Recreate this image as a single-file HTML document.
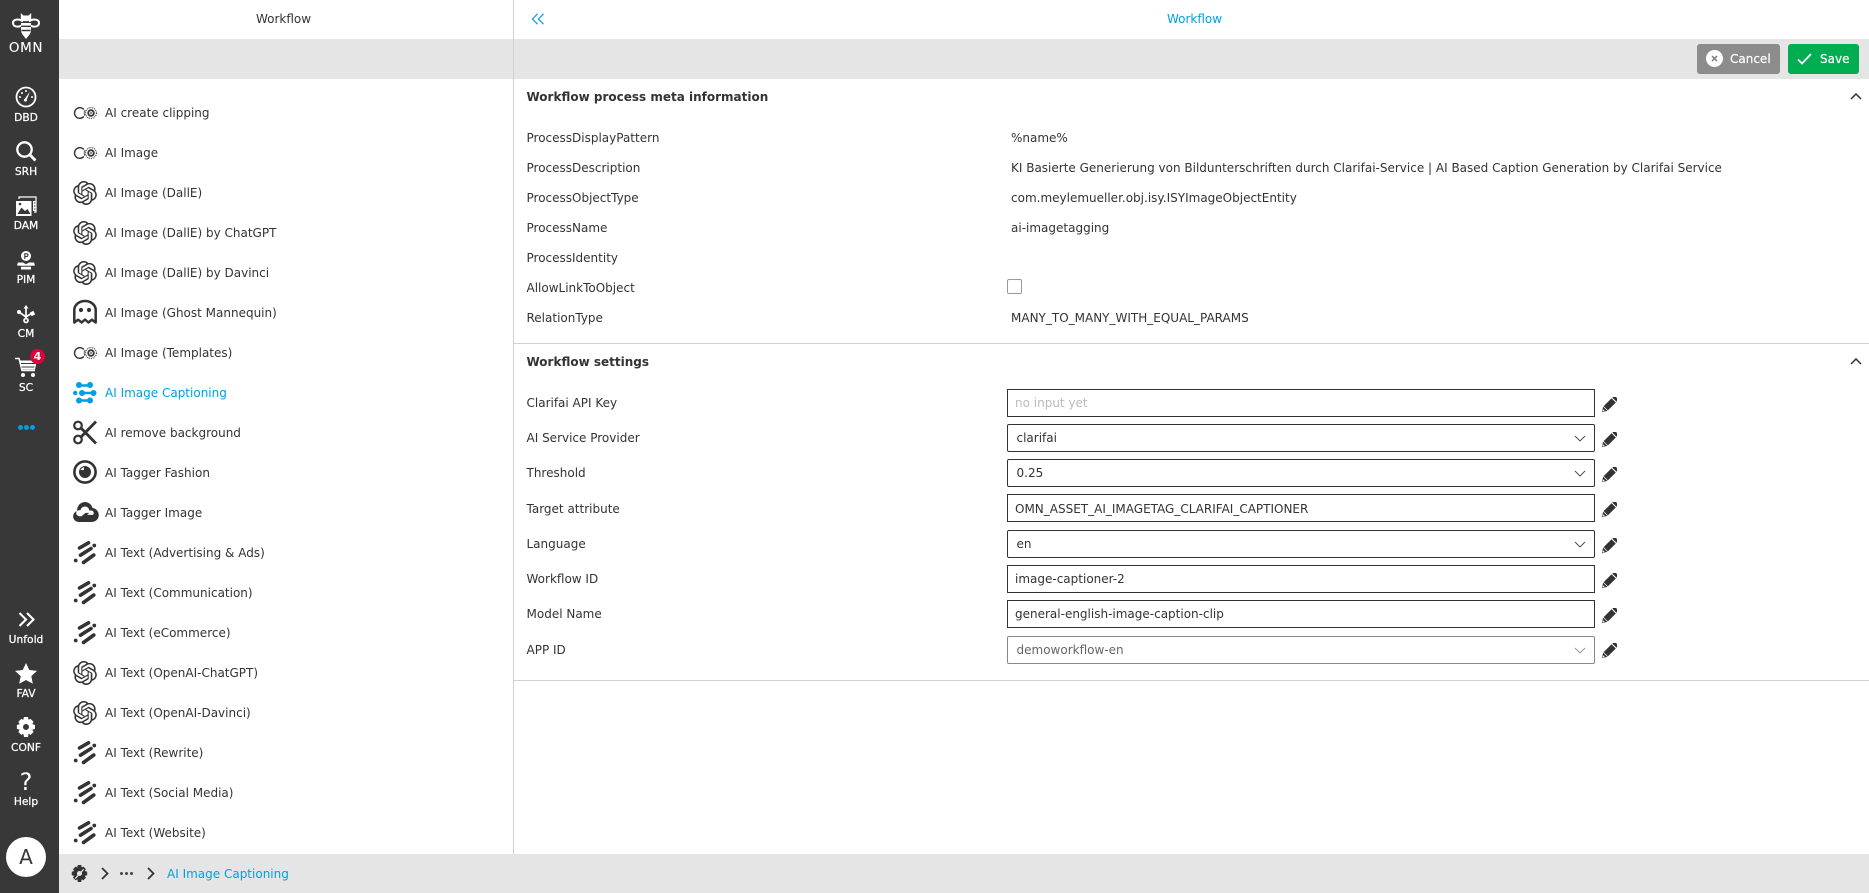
<!DOCTYPE html>
<html><head><meta charset="utf-8"><title>Workflow</title>
<style>
*{box-sizing:border-box}
html,body{margin:0;padding:0;width:1869px;height:893px;overflow:hidden;background:#fff}
body{font-family:"DejaVu Sans","Liberation Sans",sans-serif;font-size:12px;color:#333;position:relative}
.a{position:absolute}
.t{position:absolute;line-height:20px;height:20px;white-space:nowrap}
.n{position:absolute;left:0;width:52px;text-align:center;color:#fff;font-size:10.7px;line-height:14px;-webkit-text-stroke:.25px #fff;margin-top:1px}
.i{position:absolute;left:1007px;width:588px;height:28px;border:1.5px solid #333;background:#fff;line-height:27px;padding-left:7px;white-space:nowrap}
.s{border-radius:2px;padding-left:8.5px}
.dis{border-color:#888;color:#666}
.l{left:526.500px}
svg{position:absolute;overflow:visible}
</style></head><body>
<svg width="0" height="0" style="position:absolute"><defs>
<symbol id="oa" viewBox="0 0 24 24"><path fill="#333" d="M22.2819 9.8211a5.9847 5.9847 0 0 0-.5157-4.9108 6.0462 6.0462 0 0 0-6.5098-2.9A6.0651 6.0651 0 0 0 4.9807 4.1818a5.9847 5.9847 0 0 0-3.9977 2.9 6.0462 6.0462 0 0 0 .7427 7.0966 5.98 5.98 0 0 0 .511 4.9107 6.051 6.051 0 0 0 6.5146 2.9001A5.9847 5.9847 0 0 0 13.2599 24a6.0557 6.0557 0 0 0 5.7718-4.2058 5.9894 5.9894 0 0 0 3.9977-2.9001 6.0557 6.0557 0 0 0-.7475-7.0729zm-9.022 12.6081a4.4755 4.4755 0 0 1-2.8764-1.0408l.1419-.0804 4.7783-2.7582a.7948.7948 0 0 0 .3927-.6813v-6.7369l2.02 1.1686a.071.071 0 0 1 .038.052v5.5826a4.504 4.504 0 0 1-4.4945 4.4944zm-9.6607-4.1254a4.4708 4.4708 0 0 1-.5346-3.0137l.142.0852 4.783 2.7582a.7712.7712 0 0 0 .7806 0l5.8428-3.3685v2.3324a.0804.0804 0 0 1-.0332.0615L9.74 19.9502a4.4992 4.4992 0 0 1-6.1408-1.6464zM2.3408 7.8956a4.485 4.485 0 0 1 2.3655-1.9728V11.6a.7664.7664 0 0 0 .3879.6765l5.8144 3.3543-2.0201 1.1685a.0757.0757 0 0 1-.071 0l-4.8303-2.7865A4.504 4.504 0 0 1 2.3408 7.872zm16.5963 3.8558L13.1038 8.364 15.1192 7.2a.0757.0757 0 0 1 .071 0l4.8303 2.7913a4.4944 4.4944 0 0 1-.6765 8.1042v-5.6772a.79.79 0 0 0-.407-.667zm2.0107-3.0231l-.142-.0852-4.7735-2.7818a.7759.7759 0 0 0-.7854 0L9.409 9.2297V6.8974a.0662.0662 0 0 1 .0284-.0615l4.8303-2.7866a4.4992 4.4992 0 0 1 6.6802 4.66zM8.3065 12.863l-2.02-1.1638a.0804.0804 0 0 1-.038-.0567V6.0742a4.4992 4.4992 0 0 1 7.3757-3.4537l-.142.0805L8.704 5.459a.7948.7948 0 0 0-.3927.6813zm1.0976-2.3654l2.602-1.4998 2.6069 1.4998v2.9994l-2.5974 1.4997-2.6067-1.4997Z"/></symbol>
<symbol id="cl" viewBox="0 0 24 12"><path d="M10.800 2.500A5.300 5.300 0 1 0 10.800 9.500" fill="none" stroke="#333" stroke-width="1.400"/><path d="M12.200 3.200A4.500 4.500 0 0 0 12.200 8.800" fill="none" stroke="#333" stroke-width=".9"/><circle cx="18" cy="6" r="5.400" fill="none" stroke="#333" stroke-width="1.100" stroke-dasharray="1 .9"/><circle cx="18" cy="6" r="2.800" fill="none" stroke="#333" stroke-width="1.800"/><circle cx="18" cy="6" r=".9" fill="#333"/></symbol>
<symbol id="tx" viewBox="0 0 24 24"><g stroke="#333" stroke-width="3.600" stroke-linecap="round"><path d="M6.500 7L15.500 1.800M7.500 14.200L18 7.500M10.500 21.500L20.800 14"/><path d="M21.300 4.500h.01M2.700 19.500h.01" stroke-width="3.800"/></g></symbol>
<symbol id="pen" viewBox="0 0 16 16"><g transform="rotate(45 8 8)"><rect x="5" y="-2.600" width="6" height="3" rx=".8" fill="#333"/><path d="M5 1.400h6V12.600H5z" fill="#333"/><path d="M5 13.300h6L8 18.200z" fill="#333"/><path d="M6.600 15.200h2.800L8 17.200z" fill="#fff"/></g></symbol>
<symbol id="ch" viewBox="0 0 12 7"><path d="M1 1l5 5 5-5" fill="none" stroke="#444" stroke-width=".9"/></symbol>
<symbol id="chu" viewBox="0 0 12 7"><path d="M1 6l5-5 5 5" fill="none" stroke="#333" stroke-width="1.500"/></symbol>
</defs></svg>

<!-- sidebar -->
<div class="a" style="left:0;top:0;width:59px;height:893px;background:#383838"></div>
<svg style="left:12px;top:13px" width="28" height="26" viewBox="0 0 28 26"><g fill="none" stroke="#fff" stroke-width="2"><path d="M11 8.500C7 5.500 1 6 1 10s6 5 10 1.500"/><path d="M17 8.500c4-3 10-2.500 10 1.500s-6 5-10 1.500"/></g><path d="M8.800 0l2.600 2.500h5.200L19.200 0V5.800c0 1.500-2 2.400-5.200 2.400s-5.200-.9-5.200-2.400z" fill="#fff"/><path d="M9 10h10v7c0 4-3 6-5 9-2-3-5-5-5-9z" fill="#fff"/><path d="M9 13.300h10M9.500 17.500h9" stroke="#383838" stroke-width="1.400"/></svg>
<div class="n" style="top:38px;font-size:13.500px;line-height:18px;letter-spacing:.6px;-webkit-text-stroke:.1px #fff">OMN</div>
<svg style="left:15px;top:86px" width="22" height="22" viewBox="0 0 22 22"><circle cx="11" cy="11" r="9.500" fill="none" stroke="#fff" stroke-width="1.800"/><path d="M15 5.500L11.800 13.500a1.500 1.500 0 1 1-2-.8z" fill="#fff"/><path d="M5 11h.01M7 7h.01M11 5h.01M17 11h.01" stroke="#fff" stroke-width="2" stroke-linecap="round"/></svg>
<div class="n" style="top:110px">DBD</div>
<svg style="left:15px;top:140px" width="22" height="22" viewBox="0 0 22 22"><circle cx="9.500" cy="9.500" r="7.200" fill="none" stroke="#fff" stroke-width="2.300"/><path d="M14.800 14.800L20.500 20.500" stroke="#fff" stroke-width="2.800"/></svg>
<div class="n" style="top:164px">SRH</div>
<svg style="left:16px;top:196px" width="21" height="20" viewBox="0 0 21 20"><path d="M3 3V1h17v15h-2" fill="none" stroke="#fff" stroke-width="1.200"/><path d="M0 5h15.500v15H0z" fill="#fff"/><path d="M1.500 18l4-6.500 3.500 3.500 2.500-2 3 5z" fill="#383838"/><circle cx="4" cy="8" r="1.300" fill="#383838"/><path d="M17 5h3.500v10H17z" fill="#fff"/><path d="M18 7h1.500M18 10h1.500M18 13h1.500" stroke="#383838"/></svg>
<div class="n" style="top:218px">DAM</div>
<svg style="left:17px;top:251px" width="18" height="20" viewBox="0 0 18 20"><circle cx="9" cy="5" r="5" fill="#fff"/><path d="M7.800 8V2.800h1.800a1.300 1.300 0 0 1 0 2.700H7.800" fill="none" stroke="#383838" stroke-width="1.100"/><path d="M1 11.500h5l3 1.800 3-1.800h5l1 3-4 .5v3.500H4V15l-4-.5z" fill="#fff"/><path d="M0 15.300h18" stroke="#383838"/></svg>
<div class="n" style="top:272px">PIM</div>
<svg style="left:17px;top:305px" width="18" height="19" viewBox="0 0 18 19"><g stroke="#fff" stroke-width="1.700" fill="none"><path d="M9 3v10"/><path d="M2 7l7 5 6-4"/><circle cx="9" cy="15.500" r="2"/></g><path d="M9 0l2.500 3.500h-5z" fill="#fff"/><circle cx="2" cy="7" r="2" fill="#fff"/><path d="M13.500 6.500h4v4h-4z" fill="#fff" transform="rotate(-30 15.500 8.500)"/></svg>
<div class="n" style="top:326px">CM</div>
<svg style="left:14px;top:357px" width="24" height="21" viewBox="0 0 24 21"><path d="M1 1.500h4l3 12h13" fill="none" stroke="#fff" stroke-width="1.500"/><path d="M5.500 3.500H23l-2 9H8z" fill="#fff"/><path d="M7 6.500h15M7.500 10h13" stroke="#383838" stroke-width="1"/><circle cx="9" cy="18" r="2" fill="#fff"/><circle cx="19" cy="18" r="2" fill="#fff"/></svg>
<div class="a" style="left:30px;top:349px;width:15px;height:15px;border-radius:50%;background:#e2003a;color:#fff;font-size:11px;font-weight:bold;line-height:15px;text-align:center">4</div>
<div class="n" style="top:380px">SC</div>
<div class="a" style="left:18px;top:425px;width:5px;height:5px;border-radius:50%;background:#009fe3"></div>
<div class="a" style="left:24px;top:425px;width:5px;height:5px;border-radius:50%;background:#009fe3"></div>
<div class="a" style="left:30px;top:425px;width:5px;height:5px;border-radius:50%;background:#009fe3"></div>
<svg style="left:18px;top:612px" width="18" height="15" viewBox="0 0 18 15"><path d="M1.500 1l6.500 6.500L1.500 14M9 1l6.500 6.500L9 14" fill="none" stroke="#fff" stroke-width="2.100"/></svg>
<div class="n" style="top:632px">Unfold</div>
<svg style="left:15px;top:663px" width="22" height="21" viewBox="0 0 22 21"><path d="M11 0l3.300 7 7.700.9-5.700 5.200 1.500 7.600L11 17l-6.800 3.700 1.500-7.600L0 7.900 7.700 7z" fill="#fff"/></svg>
<div class="n" style="top:686px">FAV</div>
<svg style="left:16px;top:717px" width="20" height="20" viewBox="0 0 20 20"><path fill="#fff" fill-rule="evenodd" d="M8 0h4l.6 2.800 2-.9 2.900 2.900-1.200 2.300L19 8v4l-2.700.6 1.200 2.400-2.900 2.900-2-1.100L12 20H8l-.6-3.200-2.100 1.100L2.400 15l1.200-2.400L.9 12V8l2.700-.9-1.200-2.300 2.900-2.900 2 .9zM10 7a3 3 0 1 0 0 6 3 3 0 0 0 0-6z"/></svg>
<div class="n" style="top:740px">CONF</div>
<div class="a" style="left:0;top:770px;width:52px;text-align:center;color:#fff;font-size:24px;line-height:24px">?</div>
<div class="n" style="top:794px">Help</div>
<div class="a" style="left:6px;top:837px;width:40px;height:40px;border-radius:50%;background:#fff;color:#383838;font-size:20px;line-height:40px;text-align:center">A</div>

<!-- panels -->
<div class="a" style="left:59px;top:39px;width:1810px;height:40px;background:#e5e5e5"></div>
<div class="a" style="left:59px;top:854px;width:1810px;height:39px;background:#e5e5e5"></div>
<div class="a" style="left:513px;top:0;width:1px;height:854px;background:#d0d0d0"></div>
<div class="t" style="left:59px;width:449px;top:9px;text-align:center">Workflow</div>
<div class="t" style="left:514px;width:1361px;top:9px;text-align:center;color:#009fe3">Workflow</div>
<svg style="left:531px;top:13px" width="14" height="12" viewBox="0 0 14 12"><path d="M6.500 .8L1.500 6l5 5.200M12.500 .8L7.500 6l5 5.200" fill="none" stroke="#009fe3" stroke-width="1.200"/></svg>

<div class="a" style="left:1697px;top:44px;width:83px;height:30px;background:#8c8c8c;border-radius:3px"></div>
<div class="a" style="left:1706px;top:50px;width:17px;height:17px;border-radius:50%;background:#fff"></div>
<svg style="left:1711px;top:55px" width="7" height="7" viewBox="0 0 7 7"><path d="M1 1l5 5M6 1L1 6" stroke="#777" stroke-width="1.400"/></svg>
<div class="t" style="left:1730px;top:49px;color:#fff;-webkit-text-stroke:.2px #fff">Cancel</div>
<div class="a" style="left:1788px;top:44px;width:71px;height:30px;background:#00ad50;border-radius:3px"></div>
<svg style="left:1797px;top:53px" width="15" height="12" viewBox="0 0 15 12"><path d="M1 6.500L5 10.500 14 1" fill="none" stroke="#fff" stroke-width="1.800"/></svg>
<div class="t" style="left:1820px;top:49px;color:#fff;-webkit-text-stroke:.2px #fff">Save</div>

<!-- list -->
<svg style="left:73px;top:107px" width="24" height="12"><use href="#cl"/></svg><div class="t" style="left:105px;top:103px">AI create clipping</div>
<svg style="left:73px;top:147px" width="24" height="12"><use href="#cl"/></svg><div class="t" style="left:105px;top:143px">AI Image</div>
<svg style="left:73px;top:181px" width="24" height="24"><use href="#oa"/></svg><div class="t" style="left:105px;top:183px">AI Image (DallE)</div>
<svg style="left:73px;top:221px" width="24" height="24"><use href="#oa"/></svg><div class="t" style="left:105px;top:223px">AI Image (DallE) by ChatGPT</div>
<svg style="left:73px;top:261px" width="24" height="24"><use href="#oa"/></svg><div class="t" style="left:105px;top:263px">AI Image (DallE) by Davinci</div>
<svg style="left:73px;top:300px" width="24" height="24" viewBox="0 0 24 24"><path d="M1.300 22.500V10a10.700 9 0 0 1 21.400 0v12.500l-3.800-2.800-3.500 2.800-3.400-3-3.300 3-3.600-2.800z" fill="none" stroke="#333" stroke-width="2.500" stroke-linejoin="round"/><circle cx="8" cy="10" r="2.100" fill="#333"/><circle cx="16" cy="10" r="2.100" fill="#333"/></svg><div class="t" style="left:105px;top:303px">AI Image (Ghost Mannequin)</div>
<svg style="left:73px;top:347px" width="24" height="12"><use href="#cl"/></svg><div class="t" style="left:105px;top:343px">AI Image (Templates)</div>
<svg style="left:73px;top:382px" width="24" height="22" viewBox="0 0 24 22"><g stroke="#009fe3" stroke-width="2.400"><path d="M6 3.500h11M9 11h12M6 18.500h11"/></g><g fill="#009fe3"><circle cx="6" cy="3" r="3"/><circle cx="17" cy="3" r="3"/><circle cx="2.200" cy="11" r="2.200"/><circle cx="9" cy="11" r="3"/><circle cx="20.500" cy="11" r="3"/><circle cx="6" cy="18.500" r="3"/><circle cx="17" cy="18.500" r="3"/></g></svg><div class="t" style="left:105px;top:383px;color:#009fe3">AI Image Captioning</div>
<svg style="left:73px;top:420px" width="24" height="25" viewBox="0 0 24 25"><circle cx="5" cy="5.500" r="3.800" fill="none" stroke="#333" stroke-width="2.200"/><circle cx="5" cy="19.500" r="3.800" fill="none" stroke="#333" stroke-width="2.200"/><path d="M8 8l15 15.500M8 17L23 1.500" stroke="#333" stroke-width="2.800"/></svg><div class="t" style="left:105px;top:423px">AI remove background</div>
<svg style="left:73px;top:460px" width="24" height="24" viewBox="0 0 24 24"><circle cx="12" cy="12" r="10.600" fill="none" stroke="#333" stroke-width="2.600"/><circle cx="12" cy="12" r="6" fill="#333"/><path d="M7.500 10A5 5 0 0 1 11 7.200V10z" fill="#fff"/></svg><div class="t" style="left:105px;top:463px">AI Tagger Fashion</div>
<svg style="left:73px;top:502px" width="24" height="20" viewBox="0 0 24 20"><path fill="#333" d="M12 0a8 8 0 0 1 7.500 6A7 7 0 0 1 18 20H5.500A5.600 5.600 0 0 1 4.200 9 8 8 0 0 1 12 0z"/><path fill="#fff" d="M12 4.500a4.500 4.500 0 0 1 4.400 4H18a2.600 2.600 0 0 1 2 4.400h-6l2.200-2H12.500l-4 3.300H6a3 3 0 0 1 .5-6h1A4.500 4.500 0 0 1 12 4.500z"/></svg><div class="t" style="left:105px;top:503px">AI Tagger Image</div>
<svg style="left:73px;top:541px" width="24" height="24"><use href="#tx"/></svg><div class="t" style="left:105px;top:543px">AI Text (Advertising &amp; Ads)</div>
<svg style="left:73px;top:581px" width="24" height="24"><use href="#tx"/></svg><div class="t" style="left:105px;top:583px">AI Text (Communication)</div>
<svg style="left:73px;top:621px" width="24" height="24"><use href="#tx"/></svg><div class="t" style="left:105px;top:623px">AI Text (eCommerce)</div>
<svg style="left:73px;top:661px" width="24" height="24"><use href="#oa"/></svg><div class="t" style="left:105px;top:663px">AI Text (OpenAI-ChatGPT)</div>
<svg style="left:73px;top:701px" width="24" height="24"><use href="#oa"/></svg><div class="t" style="left:105px;top:703px">AI Text (OpenAI-Davinci)</div>
<svg style="left:73px;top:741px" width="24" height="24"><use href="#tx"/></svg><div class="t" style="left:105px;top:743px">AI Text (Rewrite)</div>
<svg style="left:73px;top:781px" width="24" height="24"><use href="#tx"/></svg><div class="t" style="left:105px;top:783px">AI Text (Social Media)</div>
<svg style="left:73px;top:821px" width="24" height="24"><use href="#tx"/></svg><div class="t" style="left:105px;top:823px">AI Text (Website)</div>

<!-- breadcrumb -->
<svg style="left:71px;top:865px" width="17" height="17" viewBox="0 0 20 20"><path fill="#333" fill-rule="evenodd" d="M8 0h4l.6 2.800 2-.9 2.900 2.900-1.200 2.300L19 8v4l-2.700.6 1.200 2.400-2.900 2.900-2-1.100L12 20H8l-.6-3.200-2.100 1.100L2.400 15l1.200-2.400L.9 12V8l2.700-.9-1.200-2.300 2.900-2.900 2 .9zM10 7a3 3 0 1 0 0 6 3 3 0 0 0 0-6z"/><path d="M15 5L5 16" stroke="#e5e5e5" stroke-width="1.500"/></svg>
<svg style="left:101px;top:867px" width="8" height="13" viewBox="0 0 8 13"><path d="M1 1l5.500 5.500L1 12" fill="none" stroke="#333" stroke-width="1.800"/></svg>
<div class="a" style="left:120px;top:872px;width:3px;height:3px;border-radius:50%;background:#444"></div>
<div class="a" style="left:125px;top:872px;width:3px;height:3px;border-radius:50%;background:#444"></div>
<div class="a" style="left:130px;top:872px;width:3px;height:3px;border-radius:50%;background:#444"></div>
<svg style="left:147px;top:867px" width="8" height="13" viewBox="0 0 8 13"><path d="M1 1l5.500 5.500L1 12" fill="none" stroke="#333" stroke-width="1.800"/></svg>
<div class="t" style="left:167px;top:864px;color:#009fe3">AI Image Captioning</div>

<!-- section 1 -->
<div class="t l" style="top:87px;font-weight:bold">Workflow process meta information</div>
<svg style="left:1850px;top:93px" width="12" height="7"><use href="#chu"/></svg>
<div class="t l" style="top:128px">ProcessDisplayPattern</div><div class="t" style="left:1011px;top:128px">%name%</div>
<div class="t l" style="top:158px">ProcessDescription</div><div class="t" style="left:1011px;top:158px">KI Basierte Generierung von Bildunterschriften durch Clarifai-Service | AI Based Caption Generation by Clarifai Service</div>
<div class="t l" style="top:188px">ProcessObjectType</div><div class="t" style="left:1011px;top:188px">com.meylemueller.obj.isy.ISYImageObjectEntity</div>
<div class="t l" style="top:218px">ProcessName</div><div class="t" style="left:1011px;top:218px">ai-imagetagging</div>
<div class="t l" style="top:248px">ProcessIdentity</div>
<div class="t l" style="top:278px">AllowLinkToObject</div>
<div class="a" style="left:1007px;top:279px;width:15px;height:15px;border:1px solid #999;border-radius:2px;background:#fff"></div>
<div class="t l" style="top:308px">RelationType</div><div class="t" style="left:1011px;top:308px">MANY_TO_MANY_WITH_EQUAL_PARAMS</div>
<div class="a" style="left:514px;top:343px;width:1355px;height:1px;background:#d0d0d0"></div>

<!-- section 2 -->
<div class="t l" style="top:352px;font-weight:bold">Workflow settings</div>
<svg style="left:1850px;top:358px" width="12" height="7"><use href="#chu"/></svg>

<div class="t l" style="top:393px">Clarifai API Key</div>
<div class="i" style="top:389px;color:#bbb">no input yet</div>
<svg style="left:1601px;top:397px" width="16" height="16"><use href="#pen"/></svg>

<div class="t l" style="top:428px">AI Service Provider</div>
<div class="i s" style="top:424px">clarifai</div>
<svg style="left:1574px;top:435px" width="12" height="7"><use href="#ch"/></svg>
<svg style="left:1601px;top:432px" width="16" height="16"><use href="#pen"/></svg>

<div class="t l" style="top:463px">Threshold</div>
<div class="i s" style="top:459px">0.25</div>
<svg style="left:1574px;top:470px" width="12" height="7"><use href="#ch"/></svg>
<svg style="left:1601px;top:467px" width="16" height="16"><use href="#pen"/></svg>

<div class="t l" style="top:498.500px">Target attribute</div>
<div class="i" style="top:494px;line-height:28px">OMN_ASSET_AI_IMAGETAG_CLARIFAI_CAPTIONER</div>
<svg style="left:1601px;top:502px" width="16" height="16"><use href="#pen"/></svg>

<div class="t l" style="top:534px">Language</div>
<div class="i s" style="top:530px">en</div>
<svg style="left:1574px;top:541px" width="12" height="7"><use href="#ch"/></svg>
<svg style="left:1601px;top:538px" width="16" height="16"><use href="#pen"/></svg>

<div class="t l" style="top:569px">Workflow ID</div>
<div class="i" style="top:565px">image-captioner-2</div>
<svg style="left:1601px;top:573px" width="16" height="16"><use href="#pen"/></svg>

<div class="t l" style="top:604px">Model Name</div>
<div class="i" style="top:600px">general-english-image-caption-clip</div>
<svg style="left:1601px;top:608px" width="16" height="16"><use href="#pen"/></svg>

<div class="t l" style="top:640px">APP ID</div>
<div class="i s dis" style="top:636px">demoworkflow-en</div>
<svg style="left:1574px;top:647px;opacity:.6" width="12" height="7"><use href="#ch"/></svg>
<svg style="left:1601px;top:643px" width="16" height="16"><use href="#pen"/></svg>
<div class="a" style="left:514px;top:680px;width:1355px;height:1px;background:#d0d0d0"></div>
</body></html>
